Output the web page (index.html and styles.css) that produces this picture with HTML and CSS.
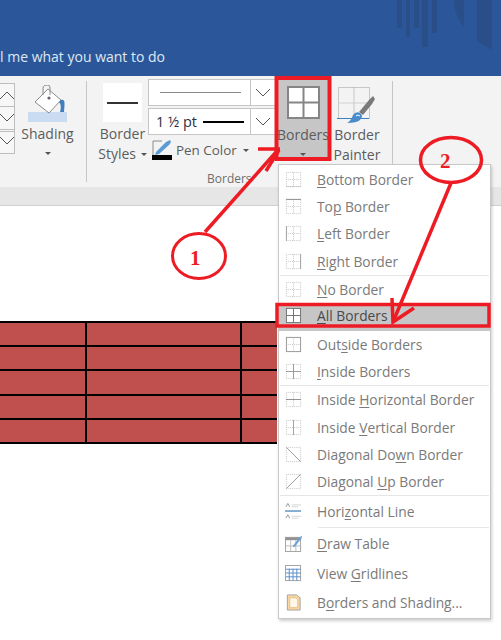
FILE: index.html
```html
<!DOCTYPE html>
<html lang="en">
<head>
<meta charset="utf-8">
<title>Borders menu</title>
<link rel="stylesheet" href="styles.css">
</head>
<body>
<svg class="defs" width="0" height="0" aria-hidden="true">
  <defs>
    <g id="grid" fill="none" stroke="#b9b9b9" stroke-width="1" stroke-dasharray="1 1">
      <rect x="1.5" y="1.5" width="15" height="15"/>
      <path d="M9 1.5V16.5M1.5 9H16.5"/>
    </g>
  </defs>
</svg>
<div class="page">
  <header class="title-bar">
    <span class="tell">l me what you want to do</span>
    <svg class="watermark" width="104" height="52" viewBox="0 0 104 52" aria-hidden="true">
      <g fill="#2a4f88">
        <rect x="0" y="0" width="5" height="28"/>
        <rect x="9" y="0" width="4" height="37"/>
        <rect x="17" y="0" width="5" height="28"/>
        <rect x="25" y="0" width="6" height="47"/>
        <rect x="35" y="0" width="5" height="33"/>
        <path d="M57 0H67V27C61 20 57 10 57 0Z"/>
        <path d="M80 0H95V50L80 41Z"/>
      </g>
    </svg>
  </header>

  <section class="ribbon">
    <div class="spin">
      <div class="spin-box"><svg width="15" height="22" viewBox="0 0 15 22"><path d="M0 15L7 8L14 15" class="chev"/></svg></div>
      <div class="spin-box"><svg width="15" height="20" viewBox="0 0 15 20"><path d="M0 7L7 14L14 7" class="chev"/></svg></div>
      <div class="spin-box spin-last"><svg width="15" height="20" viewBox="0 0 15 20"><path d="M0 5L7 12L14 5" class="chev"/></svg></div>
    </div>

    <div class="tool tool-shading">
      <svg class="tool-icon" width="40" height="39" viewBox="0 0 40 39">
        <rect x="0" y="27" width="39" height="10" fill="#c9dcf2"/>
        <path d="M7 17L20 4L33 15L21 28Z" fill="#fff" stroke="#8a8a8a" stroke-width="1"/>
        <path d="M15 10V3Q15 0 20 0Q22 0 22 3V10" fill="none" stroke="#8a8a8a"/>
        <circle cx="21" cy="13" r="1.6" fill="#666"/>
        <path d="M33 15C37 14 37 17 36 27H32Q34 20 31 17Z" fill="#3f7fbd"/>
      </svg>
      <span class="tool-text">Shading</span>
      <span class="caret"></span>
    </div>

    <div class="divider"></div>

    <div class="tool tool-styles">
      <div class="style-swatch"><span class="style-line"></span></div>
      <span class="tool-text">Border</span>
      <span class="tool-text">Styles <span class="caret caret-inline"></span></span>
    </div>

    <div class="combos">
      <div class="combo">
        <div class="combo-field"><span class="thin-line"></span></div>
        <div class="combo-drop"><svg width="16" height="10" viewBox="0 0 16 10"><path d="M1 1L8 8L15 1" class="chev"/></svg></div>
      </div>
      <div class="combo">
        <div class="combo-field"><span class="weight">1 ½ pt</span><span class="thick-line"></span></div>
        <div class="combo-drop"><svg width="16" height="10" viewBox="0 0 16 10"><path d="M1 1L8 8L15 1" class="chev"/></svg></div>
      </div>
      <div class="pen-row">
        <svg width="20" height="20" viewBox="0 0 20 20">
          <path d="M1 15V1H10" fill="none" stroke="#8a8a8a"/>
          <path d="M4 12L14 2L18 0L19 2L17 5L7 14L3 15Z" fill="#5b9bd5"/>
          <rect x="0" y="15" width="20" height="5" fill="#000"/>
        </svg>
        <span class="tool-text pen-text">Pen Color</span>
        <span class="caret caret-pen"></span>
      </div>
      <div class="group-name">Borders</div>
    </div>

    <div class="tool tool-borders">
      <svg class="tool-icon" width="34" height="34" viewBox="0 0 34 34">
        <rect x="1" y="1" width="31" height="31" fill="#fff" stroke="#858585" stroke-width="2"/>
        <path d="M16.5 1V32M1 16.5H32" stroke="#858585" stroke-width="2"/>
      </svg>
      <span class="tool-text">Borders</span>
      <span class="caret"></span>
    </div>

    <div class="tool tool-painter">
      <svg class="tool-icon" width="40" height="38" viewBox="0 0 40 38">
        <g fill="none" stroke="#9a9a9a" stroke-dasharray="1 1">
          <rect x="1.5" y="1.5" width="31" height="31"/>
          <path d="M17 1.5V32"/>
          <path d="M1.5 17H32" stroke="#d0d0d0" stroke-dasharray="none"/>
        </g>
        <path d="M0 32.5H32" stroke="#3f7fbd"/>
        <path d="M22 26L32 14L36 10L38 13L35 18L26 29Z" fill="#7a7a7a"/>
        <path d="M10 37Q14 35 16 29Q19 25 23 27Q27 30 23 34Q20 37 10 37Z" fill="#4a8ccb"/>
        <path d="M19 30Q21 28 23 30" stroke="#fff" fill="none"/>
      </svg>
      <span class="tool-text">Border</span>
      <span class="tool-text">Painter</span>
    </div>

    <div class="divider divider-end"></div>
  </section>

  <div class="ribbon-foot"></div>

  <main class="doc">
    <div class="sheet">
      <div class="cell"></div><div class="cell"></div><div class="cell"></div>
      <div class="cell"></div><div class="cell"></div><div class="cell"></div>
      <div class="cell"></div><div class="cell"></div><div class="cell"></div>
      <div class="cell"></div><div class="cell"></div><div class="cell"></div>
      <div class="cell"></div><div class="cell"></div><div class="cell"></div>
    </div>
  </main>

  <nav class="menu">
    <div class="item"><svg class="ico" viewBox="0 0 18 18"><use href="#grid"/><path d="M1 16.5H17" stroke="#8a8a8a" stroke-opacity=".35"/></svg><span><u>B</u>ottom Border</span></div>
    <div class="item"><svg class="ico" viewBox="0 0 18 18"><use href="#grid"/><path d="M1 1.5H17" stroke="#707070"/></svg><span>To<u>p</u> Border</span></div>
    <div class="item"><svg class="ico" viewBox="0 0 18 18"><use href="#grid"/><path d="M1.5 1V17" stroke="#8a8a8a"/></svg><span><u>L</u>eft Border</span></div>
    <div class="item"><svg class="ico" viewBox="0 0 18 18"><use href="#grid"/><path d="M16.5 1V17" stroke="#8a8a8a"/></svg><span><u>R</u>ight Border</span></div>
    <div class="sep"></div>
    <div class="item"><svg class="ico" viewBox="0 0 18 18"><use href="#grid"/></svg><span><u>N</u>o Border</span></div>
    <div class="item item-active"><svg class="ico" viewBox="0 0 18 18"><rect x="1.5" y="1.5" width="15" height="15" fill="#fff" stroke="#707070"/><path d="M9 1.5V16.5M1.5 9H16.5" stroke="#707070"/></svg><span><u>A</u>ll Borders</span></div>
    <div class="item"><svg class="ico" viewBox="0 0 18 18"><use href="#grid"/><rect x="1.5" y="1.5" width="15" height="15" fill="none" stroke="#808080"/></svg><span>Out<u>s</u>ide Borders</span></div>
    <div class="item"><svg class="ico" viewBox="0 0 18 18"><use href="#grid"/><path d="M9 1V17M1 9H17" stroke="#808080"/></svg><span><u>I</u>nside Borders</span></div>
    <div class="sep"></div>
    <div class="item"><svg class="ico" viewBox="0 0 18 18"><use href="#grid"/><path d="M1 9H17" stroke="#707070"/></svg><span>Inside <u>H</u>orizontal Border</span></div>
    <div class="item"><svg class="ico" viewBox="0 0 18 18"><use href="#grid"/><path d="M9 1V17" stroke="#8a8a8a"/></svg><span>Inside <u>V</u>ertical Border</span></div>
    <div class="item"><svg class="ico" viewBox="0 0 18 18"><rect x="1.5" y="1.5" width="15" height="15" fill="none" stroke="#b9b9b9" stroke-dasharray="1 1"/><path d="M1.5 1.5L16.5 16.5" stroke="#808080"/></svg><span>Diagonal Do<u>w</u>n Border</span></div>
    <div class="item"><svg class="ico" viewBox="0 0 18 18"><rect x="1.5" y="1.5" width="15" height="15" fill="none" stroke="#b9b9b9" stroke-dasharray="1 1"/><path d="M1.5 16.5L16.5 1.5" stroke="#808080"/></svg><span>Diagonal <u>U</u>p Border</span></div>
    <div class="sep"></div>
    <div class="item item-tall"><svg class="ico" viewBox="0 0 18 18"><path d="M1 4L3 0.5L5 4M1 16L3 12.500L5 16" fill="none" stroke="#777"/><path d="M7 2H17M7 4H14M7 14H17M7 16H14" stroke="#ccc"/><path d="M0 8.500H17" stroke="#2e75b6" stroke-width="1.500"/></svg><span>Hori<u>z</u>ontal Line</span></div>
    <div class="sep sep-inset"></div>
    <div class="item item-tall"><svg class="ico" viewBox="0 0 18 18"><rect x="0.500" y="2.500" width="16" height="15" fill="#fff" stroke="#8a8a8a"/><rect x="0.500" y="2.500" width="16" height="3" fill="#777"/><path d="M6 5.500V17M11.500 5.500V17M1 11.500H16" stroke="#aaa"/><path d="M8 12L15 3L18 0.500L17.500 3.500L10 13Z" fill="#4a8ccb"/></svg><span><u>D</u>raw Table</span></div>
    <div class="item item-grid"><svg class="ico" viewBox="0 0 18 18"><rect x="0.500" y="0.500" width="16" height="16" fill="#fff" stroke="#8a8a8a"/><path d="M4.500 4V16.500M8.500 4V16.500M12.500 4V16.500M1 4.500H16.500M1 8.500H16.500M1 12.500H16.500" stroke="#2e6fbb"/></svg><span>View <u>G</u>ridlines</span></div>
    <div class="item item-grid"><svg class="ico" viewBox="0 0 18 18"><path d="M2.500 1H12L16 4V17H2.500Z" fill="#f7cf8f" stroke="#8a8a8a"/><path d="M5 4H11.500L13.500 6V14.500H5Z" fill="#fff6e6" stroke="#e5ad5c"/></svg><span>B<u>o</u>rders and Shading...</span></div>
  </nav>

  <svg class="marks" width="501" height="640" viewBox="0 0 501 640" aria-hidden="false">
    <g fill="none" stroke="#ed1c24">
      <rect x="276.500" y="78" width="53" height="81" stroke-width="4"/>
      <rect x="277" y="304.500" width="212" height="21.500" stroke-width="3.500"/>
      <ellipse cx="199" cy="256" rx="26.500" ry="22.500" stroke-width="3"/>
      <ellipse cx="451" cy="160" rx="30.500" ry="22.500" stroke-width="3.500"/>
      <path d="M205 232L277 151" stroke-width="3.500"/>
      <path d="M258 149H280M279 150L266 171" stroke-width="3.500"/>
      <path d="M451 183L393 322" stroke-width="3.500"/>
      <path d="M392 298L393 322L414 308" stroke-width="3.500"/>
    </g>
    <text x="190" y="265" class="mark-num">1</text>
    <text x="440" y="168" class="mark-num">2</text>
  </svg>
</div>
</body>
</html>
```

FILE: styles.css
```css
* { box-sizing: border-box; }
html, body { margin: 0; padding: 0; background: #fff; }
body { font-family: "Open Sans", "Noto Sans", sans-serif; }
.defs { position: absolute; }
.page { position: relative; width: 501px; height: 640px; overflow: hidden; display: flex; flex-direction: column; }

.title-bar { position: relative; height: 76px; flex: none; background: #2b579a; color: #dfe8f4; display: flex; align-items: flex-end; padding-bottom: 10px; }
.tell { font-size: 14px; line-height: 18px; white-space: nowrap; }
.watermark { position: absolute; left: 397px; top: 0; }

.ribbon { height: 111px; flex: none; background: #f3f3f3; display: flex; align-items: flex-start; color: #595959; }
.tool { display: flex; flex-direction: column; align-items: center; flex: none; }
.tool-text { font-size: 14px; line-height: 20px; white-space: nowrap; color: #5c5c5c; }
.tool-icon { display: block; flex: none; }
.chev { fill: none; stroke: #555; stroke-width: 1; }

.spin { width: 15px; margin-top: 7px; flex: none; display: flex; flex-direction: column; }
.spin-box { height: 24px; border: 1px solid #bdbdbd; border-left: 0; background: #f7f7f7; overflow: hidden; }
.spin-box svg { display: block; }
.spin-box + .spin-box { margin-top: -1px; }
.spin-last { margin-top: 0; height: 25px; border-top: 3px double #bdbdbd; }

.tool-shading { width: 51px; margin-left: 7px; padding-top: 8px; }
.tool-shading .tool-icon { margin-top: 1px; }
.caret { display: block; width: 0; height: 0; border-left: 3px solid transparent; border-right: 3px solid transparent; border-top: 3px solid #555; margin-top: 8px; }
.caret-inline { display: inline-block; margin: 0 0 2px 1px; vertical-align: middle; }

.divider { width: 1px; height: 101px; background: #c6c6c6; margin-left: 13px; margin-top: 5px; flex: none; }
.divider-end { margin-left: 8px; }

.tool-styles { width: 49px; margin-left: 11px; padding-top: 7px; }
.style-swatch { width: 39px; height: 39px; background: #fff; display: flex; align-items: center; justify-content: center; margin-bottom: 2px; }
.style-line { display: block; width: 31px; height: 2px; background: #333; }

.combos { width: 127px; margin-left: 1px; padding-top: 3px; flex: none; display: flex; flex-direction: column; }
.combo { display: flex; height: 27px; margin-bottom: 2px; background: #fff; border: 1px solid #c6c6c6; border-right: 0; }
.combo-field { width: 102px; display: flex; align-items: center; gap: 6px; padding: 0 0 0 7px; border-right: 1px solid #c6c6c6; flex: none; }
.combo-drop { flex: 1; display: flex; align-items: center; justify-content: center; }
.combo-drop svg { display: block; }
.thin-line { display: block; width: 81px; height: 1px; background: #8a8a8a; margin-left: 4px; }
.weight { font-size: 14.500px; color: #2f2f3f; white-space: nowrap; }
.thick-line { display: block; width: 41px; height: 2px; background: #000; }
.pen-row { display: flex; align-items: center; height: 22px; margin-top: 2px; padding-left: 4px; gap: 4px; }
.pen-row svg { display: block; flex: none; }
.pen-text { font-size: 13.400px; }
.caret-pen { margin: 0 0 0 2px; }
.group-name { font-size: 12px; line-height: 16px; color: #6e6e6e; margin: 10px 0 0 59px; white-space: nowrap; }

.tool-borders { width: 50px; height: 81px; margin-left: 3px; margin-top: 4px; background: #c6c6c6; padding-top: 6px; overflow: hidden; }
.tool-borders .tool-icon { margin-left: 2px; }
.tool-borders .tool-text { margin-top: 5px; }
.tool-painter { width: 54px; margin-left: 2px; padding-top: 10px; }
.tool-painter .tool-text:first-of-type { margin-top: 1px; }

.ribbon-foot { height: 19px; flex: none; background: #e6e6e6; border-bottom: 1px solid #d0d0d0; }
.doc { flex: 1; background: #fff; padding-top: 115px; }
.sheet { width: 277px; display: grid; grid-template-columns: 85px 153px 1fr; grid-auto-rows: 22.200px; gap: 2px; background: #000; border-top: 2px solid #000; border-bottom: 2px solid #000; }
.cell { background: #c0504d; }

.menu { position: absolute; left: 278px; top: 164px; width: 213px; height: 455px; background: #fff; border: 1px solid #c8c8c8; box-shadow: 1px 2px 3px rgba(0,0,0,.2); padding-top: 1px; display: flex; flex-direction: column; }
.item { display: flex; align-items: center; height: 27.200px; flex: none; padding-left: 6px; font-size: 13.800px; color: #7a7a7a; white-space: nowrap; }
.ico { width: 17px; height: 17px; flex: none; margin-right: 15px; display: block; opacity: .8; }
.item u { text-decoration-thickness: 1px; text-underline-offset: 2px; }
.item-active { background: #c6c6c6; color: #4a4a4a; height: 28px; padding-bottom: 3px; }
.item-active .ico { opacity: 1; }
.item-tall { height: 31px; }
.item-grid { height: 29px; }
.sep { height: 1px; flex: none; margin: 0 1px; background: #e6e6e6; }
.sep-inset { margin-left: 39px; }

.marks { position: absolute; left: 0; top: 0; pointer-events: none; }
.mark-num { font-family: "Liberation Serif", serif; font-weight: 700; font-size: 21px; fill: #ed1c24; }
```
